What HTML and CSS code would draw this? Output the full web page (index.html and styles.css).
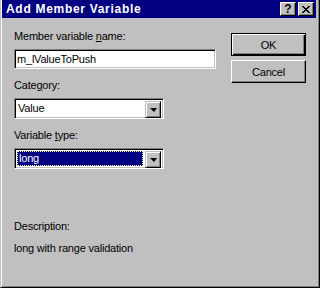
FILE: index.html
```html
<!DOCTYPE html>
<html lang="en">
<head>
    <meta charset="UTF-8">
    <title>Add Member Variable</title>
    <link rel="stylesheet" href="styles.css">
</head>
<body>
    <div class="window">
        <div class="titlebar">
            <span class="title">Add Member Variable</span>
            <div class="title-buttons">
                <div class="tbtn">?</div>
                <div class="tbtn">
                    <svg width="8" height="7" viewBox="0 0 8 7"><path d="M0 0h2v1h1v1h2v-1h1v-1h2v1h-1v1h-1v1h-1v1h1v1h1v1h1v1h-2v-1h-1v-1h-2v1h-1v1h-2v-1h1v-1h1v-1h1v-1h-1v-1h-1v-1h-1z" fill="#000"/></svg>
                </div>
            </div>
        </div>

        <div class="main">
            <div class="fields">
                <div class="label">Member variable <u>n</u>ame:</div>
                <div class="edit">m_lValueToPush</div>

                <div class="label gap">Cate<u>g</u>ory:</div>
                <div class="combo">
                    <div class="combo-text">Value</div>
                    <div class="arrow"><span class="tri"></span></div>
                </div>

                <div class="label gap">Variable <u>t</u>ype:</div>
                <div class="combo focused">
                    <div class="combo-text"><span class="sel">long</span></div>
                    <div class="arrow"><span class="tri"></span></div>
                </div>

                <div class="label desc-head">Description:</div>
                <div class="label desc">long with range validation</div>
            </div>

            <div class="buttons">
                <div class="btn default"><span>OK</span></div>
                <div class="btn"><span>Cancel</span></div>
            </div>
        </div>
    </div>
</body>
</html>
```

FILE: styles.css
```css
body {
    margin: 0;
    background: #c0c0c0;
    font-family: "Liberation Sans", Arial, sans-serif;
    font-size: 11px;
    letter-spacing: -0.2px;
    color: #000;
}
.window {
    width: 320px;
    height: 288px;
    box-sizing: border-box;
    background: #c0c0c0;
    border-left: 1px solid #c0c0c0;
    border-right: 1px solid #000;
    border-bottom: 1px solid #000;
    box-shadow: inset 1px 0 #fff, inset -1px -1px #808080;
    padding: 0 3px 3px 1px;
}
.titlebar {
    height: 18px;
    background: #000080;
    display: flex;
    align-items: center;
    justify-content: space-between;
    padding: 0 2px 0 4px;
}
.title {
    color: #fff;
    font-weight: bold;
    font-size: 12px;
    letter-spacing: 0.7px;
}
.title-buttons {
    display: flex;
    gap: 2px;
}
.tbtn {
    width: 16px;
    height: 14px;
    box-sizing: border-box;
    background: #c0c0c0;
    border-top: 1px solid #fff;
    border-left: 1px solid #fff;
    border-right: 1px solid #000;
    border-bottom: 1px solid #000;
    box-shadow: inset -1px -1px #808080;
    display: flex;
    align-items: center;
    justify-content: center;
    font-weight: bold;
    font-size: 12px;
    line-height: 12px;
    letter-spacing: 0;
}
.main {
    display: flex;
    padding: 12px 0 0 12px;
}
.fields {
    width: 202px;
}
.label {
    line-height: 13px;
    height: 13px;
    margin-bottom: 6px;
    white-space: nowrap;
}
.label.gap {
    margin-top: 10px;
}
.label.desc-head {
    margin-top: 51px;
    margin-bottom: 9px;
}
.edit {
    height: 20px;
    box-sizing: border-box;
    background: #fff;
    border-top: 1px solid #808080;
    border-left: 1px solid #808080;
    border-right: 1px solid #fff;
    border-bottom: 1px solid #fff;
    box-shadow: inset 1px 1px #000, inset -1px -1px #c0c0c0;
    padding: 0 2px;
    line-height: 18px;
}
.combo {
    width: 150px;
    height: 21px;
    box-sizing: border-box;
    background: #fff;
    border-top: 1px solid #808080;
    border-left: 1px solid #808080;
    border-right: 1px solid #fff;
    border-bottom: 1px solid #fff;
    box-shadow: inset 1px 1px #000, inset -1px -1px #c0c0c0;
    padding: 2px;
    display: flex;
}
.combo-text {
    flex: 1;
    line-height: 15px;
    padding-left: 1px;
}
.combo.focused .combo-text {
    padding: 1px;
}
.sel {
    display: block;
    height: 15px;
    box-sizing: border-box;
    background: #000080;
    color: #fff;
    border: 1px dotted #ffffa0;
    line-height: 13px;
    padding-left: 1px;
    margin: -1px 1px -1px -1px;
}
.arrow {
    width: 16px;
    height: 17px;
    box-sizing: border-box;
    background: #c0c0c0;
    border-top: 1px solid #c0c0c0;
    border-left: 1px solid #c0c0c0;
    border-right: 1px solid #000;
    border-bottom: 1px solid #000;
    box-shadow: inset 1px 1px #fff, inset -1px -1px #808080;
    display: flex;
    align-items: center;
    justify-content: center;
}
.tri {
    width: 0;
    height: 0;
    border-left: 4px solid transparent;
    border-right: 3px solid transparent;
    border-top: 4px solid #000;
}
.buttons {
    margin-left: 15px;
    padding-top: 3px;
    display: flex;
    flex-direction: column;
    gap: 4px;
}
.btn {
    width: 75px;
    height: 23px;
    box-sizing: border-box;
    background: #c0c0c0;
    border-top: 1px solid #fff;
    border-left: 1px solid #fff;
    border-right: 1px solid #000;
    border-bottom: 1px solid #000;
    box-shadow: inset -1px -1px #808080;
    display: flex;
    align-items: center;
    justify-content: center;
}
.btn.default {
    border: 1px solid #000;
    box-shadow: inset 1px 1px #fff, inset -1px -1px #000, inset -2px -2px #808080;
}
```
